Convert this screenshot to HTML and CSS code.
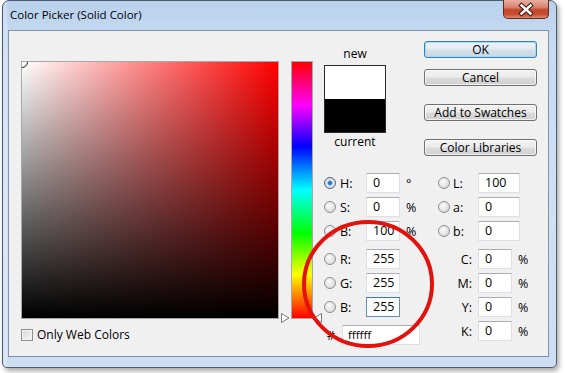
FILE: index.html
```html
<!DOCTYPE html>
<html lang="en">
<head>
<meta charset="UTF-8">
<meta name="viewport" content="width=device-width, initial-scale=1.0">
<title>Color Picker (Solid Color)</title>
<link rel="stylesheet" href="styles.css">
</head>
<body>

<div class="window">
  <!-- title bar -->
  <div class="titlebar">
    <span class="title">Color Picker (Solid Color)</span>
    <button class="close-btn">
      <svg width="44" height="17" viewBox="0 0 44 17">
        <path d="M17.5 4.5 L26.5 12.5 M26.5 4.5 L17.5 12.5" stroke="#4a2018" stroke-width="4.6" stroke-linecap="square" fill="none"/>
        <path d="M17.5 4.5 L26.5 12.5 M26.5 4.5 L17.5 12.5" stroke="#fff" stroke-width="2.4" stroke-linecap="square" fill="none"/>
      </svg>
    </button>
  </div>

  <div class="client">
    <!-- saturation / brightness field -->
    <div class="picker-col">
      <div class="color-field">
        <div class="field-marker"></div>
      </div>
      <div class="web-only"><span class="checkbox"></span>Only Web Colors</div>
    </div>

    <!-- hue slider -->
    <div class="hue-wrap">
      <div class="hue-slider"></div>
      <svg class="arrow arrow-left" width="9" height="10" viewBox="0 0 9 10">
        <path d="M0.5 0.5 L8 5 L0.5 9.5 Z" fill="#fff" stroke="#7a7a7a"/>
      </svg>
      <svg class="arrow arrow-right" width="9" height="10" viewBox="0 0 9 10">
        <path d="M8.5 0.5 L1 5 L8.5 9.5 Z" fill="#fff" stroke="#7a7a7a"/>
      </svg>
    </div>

    <div class="side">
      <div class="top-row">
        <div class="swatch-col">
          <div class="swatch-label">new</div>
          <div class="swatch">
            <div class="swatch-new"></div>
            <div class="swatch-current"></div>
          </div>
          <div class="swatch-label swatch-label-bottom">current</div>
        </div>
        <div class="buttons">
          <button class="btn btn-default">OK</button>
          <button class="btn">Cancel</button>
          <button class="btn btn-gap">Add to Swatches</button>
          <button class="btn btn-gap">Color Libraries</button>
        </div>
      </div>

      <div class="fields">
        <!-- HSB / RGB / hex -->
        <div class="field-col">
          <div class="row"><span class="radio checked"></span><span class="lbl">H:</span><span class="box">0</span><span class="unit">°</span></div>
          <div class="row"><span class="radio"></span><span class="lbl">S:</span><span class="box">0</span><span class="unit">%</span></div>
          <div class="row"><span class="radio"></span><span class="lbl">B:</span><span class="box">100</span><span class="unit">%</span></div>
          <div class="row group"><span class="radio"></span><span class="lbl">R:</span><span class="box">255</span></div>
          <div class="row"><span class="radio"></span><span class="lbl">G:</span><span class="box">255</span></div>
          <div class="row"><span class="radio"></span><span class="lbl">B:</span><span class="box focused">255</span></div>
          <div class="row group"><span class="hash">#</span><span class="box hex">ffffff</span></div>
        </div>
        <!-- Lab / CMYK -->
        <div class="field-col right-col">
          <div class="row"><span class="radio"></span><span class="lbl">L:</span><span class="box wide">100</span></div>
          <div class="row"><span class="radio"></span><span class="lbl">a:</span><span class="box wide">0</span></div>
          <div class="row"><span class="radio"></span><span class="lbl">b:</span><span class="box wide">0</span></div>
          <div class="row group"><span class="cmyk-lbl">C:</span><span class="box">0</span><span class="unit">%</span></div>
          <div class="row"><span class="cmyk-lbl">M:</span><span class="box">0</span><span class="unit">%</span></div>
          <div class="row"><span class="cmyk-lbl">Y:</span><span class="box">0</span><span class="unit">%</span></div>
          <div class="row"><span class="cmyk-lbl">K:</span><span class="box">0</span><span class="unit">%</span></div>
        </div>
      </div>
    </div>
  </div>
</div>

<!-- red circle drawn over the screenshot -->
<svg class="annotation" width="565" height="373" viewBox="0 0 565 373">
  <ellipse cx="368" cy="284" rx="64" ry="62" fill="none" stroke="#e2120c" stroke-width="4"/>
</svg>

</body>
</html>
```

FILE: styles.css
```css
body {
  margin: 0;
  width: 565px;
  height: 373px;
  overflow: hidden;
  position: relative;
  background: #fff;
  font-family: "Open Sans", "Liberation Sans", sans-serif;
  font-size: 12px;
  color: #000;
}
.window {
  margin-left: 2px;
  width: 555px;
  height: 368px;
  box-sizing: border-box;
  border: 1px solid #4c5b6e;
  border-radius: 7px 7px 5px 5px;
  padding: 0 7px 10px 5px;
  background:
    linear-gradient(to right, rgba(255, 255, 255, 0) 0, rgba(255, 255, 255, 0.35) 2px, rgba(255, 255, 255, 0) 5px),
    linear-gradient(to bottom, #b9d1ed 0%, #c6daf1 10%, #d1e1f4 60%, #cddef3 100%);
  box-shadow: 2px 3px 5px rgba(0, 0, 0, 0.35);
}
.titlebar {
  height: 29px;
  display: flex;
  justify-content: space-between;
  align-items: flex-start;
}
.title {
  margin: 6px 0 0 2px;
  line-height: 16px;
  font-size: 11.5px;
}
.close-btn {
  margin-top: -1px;
  width: 46px;
  height: 19px;
  padding: 0;
  border: 1px solid #5e2b22;
  border-top: none;
  border-radius: 0 0 5px 5px;
  background: linear-gradient(to bottom, #eab0a2 0%, #d88370 40%, #c4462c 55%, #c84e33 80%, #dc8b74 100%);
  display: flex;
  align-items: center;
  justify-content: center;
}
.client {
  width: 541px;
  height: 327px;
  box-sizing: border-box;
  border: 1px solid #8092ab;
  background: #f0f0f0;
  padding: 10px 0 0 12px;
  display: flex;
  align-items: flex-start;
}
.picker-col {
  margin-top: 20px;
  width: 258px;
}
.color-field {
  width: 258px;
  height: 258px;
  box-sizing: border-box;
  border: 1px solid #a8a8a8;
  position: relative;
  overflow: hidden;
  background: linear-gradient(to top, #000, rgba(0, 0, 0, 0)), linear-gradient(to right, #fff, #f00);
}
.field-marker {
  position: absolute;
  left: -6px;
  top: -6px;
  width: 10px;
  height: 10px;
  border: 1.5px solid #1a1a1a;
  border-radius: 50%;
}
.web-only {
  margin-top: 9px;
  display: flex;
  align-items: center;
  line-height: 14px;
}
.checkbox {
  width: 12px;
  height: 12px;
  box-sizing: border-box;
  border: 1px solid #8e8f8f;
  background: linear-gradient(135deg, #d8d8d8, #f4f4f4);
  box-shadow: inset 0 0 0 1px #f5f5f5;
  margin-right: 4px;
}
.hue-wrap {
  margin: 20px 0 0 12px;
  width: 22px;
  height: 258px;
  position: relative;
}
.hue-slider {
  width: 22px;
  height: 258px;
  box-sizing: border-box;
  border: 1px solid #a8a8a8;
  background: linear-gradient(to bottom, #f00 0%, #f0f 17%, #00f 33%, #0ff 50%, #0f0 67%, #ff0 83%, #f00 100%);
}
.arrow {
  position: absolute;
  top: 252px;
}
.arrow-left {
  left: -10px;
}
.arrow-right {
  left: 22px;
}
.side {
  margin-left: 11px;
}
.top-row {
  display: flex;
  align-items: flex-start;
}
.swatch-col {
  margin-top: 6px;
  width: 62px;
}
.swatch-label {
  text-align: center;
  line-height: 14px;
  height: 14px;
}
.swatch-label-bottom {
  margin-top: 2px;
}
.swatch {
  margin-top: 4px;
  width: 62px;
  height: 68px;
  box-sizing: border-box;
  border: 1px solid #2a2a2a;
  display: flex;
  flex-direction: column;
}
.swatch-new {
  flex: 1;
  background: #fff;
}
.swatch-current {
  flex: 1;
  background: #000;
}
.buttons {
  margin-left: 38px;
  display: flex;
  flex-direction: column;
}
.btn {
  width: 113px;
  height: 17px;
  box-sizing: border-box;
  padding: 0;
  margin-top: 11px;
  font-family: inherit;
  font-size: 12px;
  line-height: 14px;
  color: #000;
  border: 1px solid #707070;
  border-radius: 3px;
  background: linear-gradient(to bottom, #f2f2f2 0%, #ebebeb 48%, #dcdcdc 52%, #cfcfcf 100%);
  box-shadow: inset 0 0 0 1px rgba(255, 255, 255, 0.7);
}
.btn-default {
  margin-top: 0;
  border-color: #3c7fb1;
  background: linear-gradient(to bottom, #eef3f7 0%, #e2ebf1 48%, #d3dfe8 52%, #c9d7e2 100%);
  box-shadow: inset 0 0 0 1px #9fdcf8;
}
.btn-gap {
  margin-top: 18px;
}
.fields {
  margin-top: 17px;
  display: flex;
}
.field-col {
  width: 114px;
}
.row {
  height: 20px;
  margin-bottom: 4px;
  display: flex;
  align-items: center;
}
/* collapses with the row above: 8px gap between groups */
.group {
  margin-top: 8px;
}
.radio {
  width: 12px;
  height: 12px;
  box-sizing: border-box;
  border: 1px solid #8f8f8f;
  border-radius: 50%;
  background: radial-gradient(circle at 40% 35%, #fbfbfb 0%, #e6e6e6 50%, #cacaca 100%);
  margin-right: 4px;
  flex: none;
}
.radio.checked {
  border-color: #4d6785;
  background: radial-gradient(circle, #1f6fb8 0%, #2d86d0 25%, #8cc1ec 34%, #e8e8e8 42%, #d0d0d0 100%);
}
.lbl {
  width: 26px;
  font-size: 12.5px;
}
.right-col .radio {
  margin-right: 3px;
}
.right-col .lbl {
  width: 25px;
}
.cmyk-lbl {
  width: 40px;
  box-sizing: border-box;
  padding-right: 6px;
  text-align: right;
  font-size: 12.5px;
}
.box {
  width: 34px;
  height: 20px;
  box-sizing: border-box;
  border: 1px solid #dbdfe6;
  border-top-color: #abadb3;
  background: #fff;
  padding-left: 6px;
  line-height: 18px;
  font-size: 12.5px;
}
.box.wide {
  width: 42px;
}
.box.hex {
  width: 78px;
  padding-left: 5px;
  font-size: 11.5px;
}
.box.focused {
  border-color: #5c93c4;
  border-top-color: #3d7bad;
}
.unit {
  margin-left: 6px;
  font-size: 12.5px;
}
.hash {
  width: 18px;
  box-sizing: border-box;
  padding-right: 4px;
  text-align: center;
}
.annotation {
  position: absolute;
  left: 0;
  top: 0;
  pointer-events: none;
}
```
